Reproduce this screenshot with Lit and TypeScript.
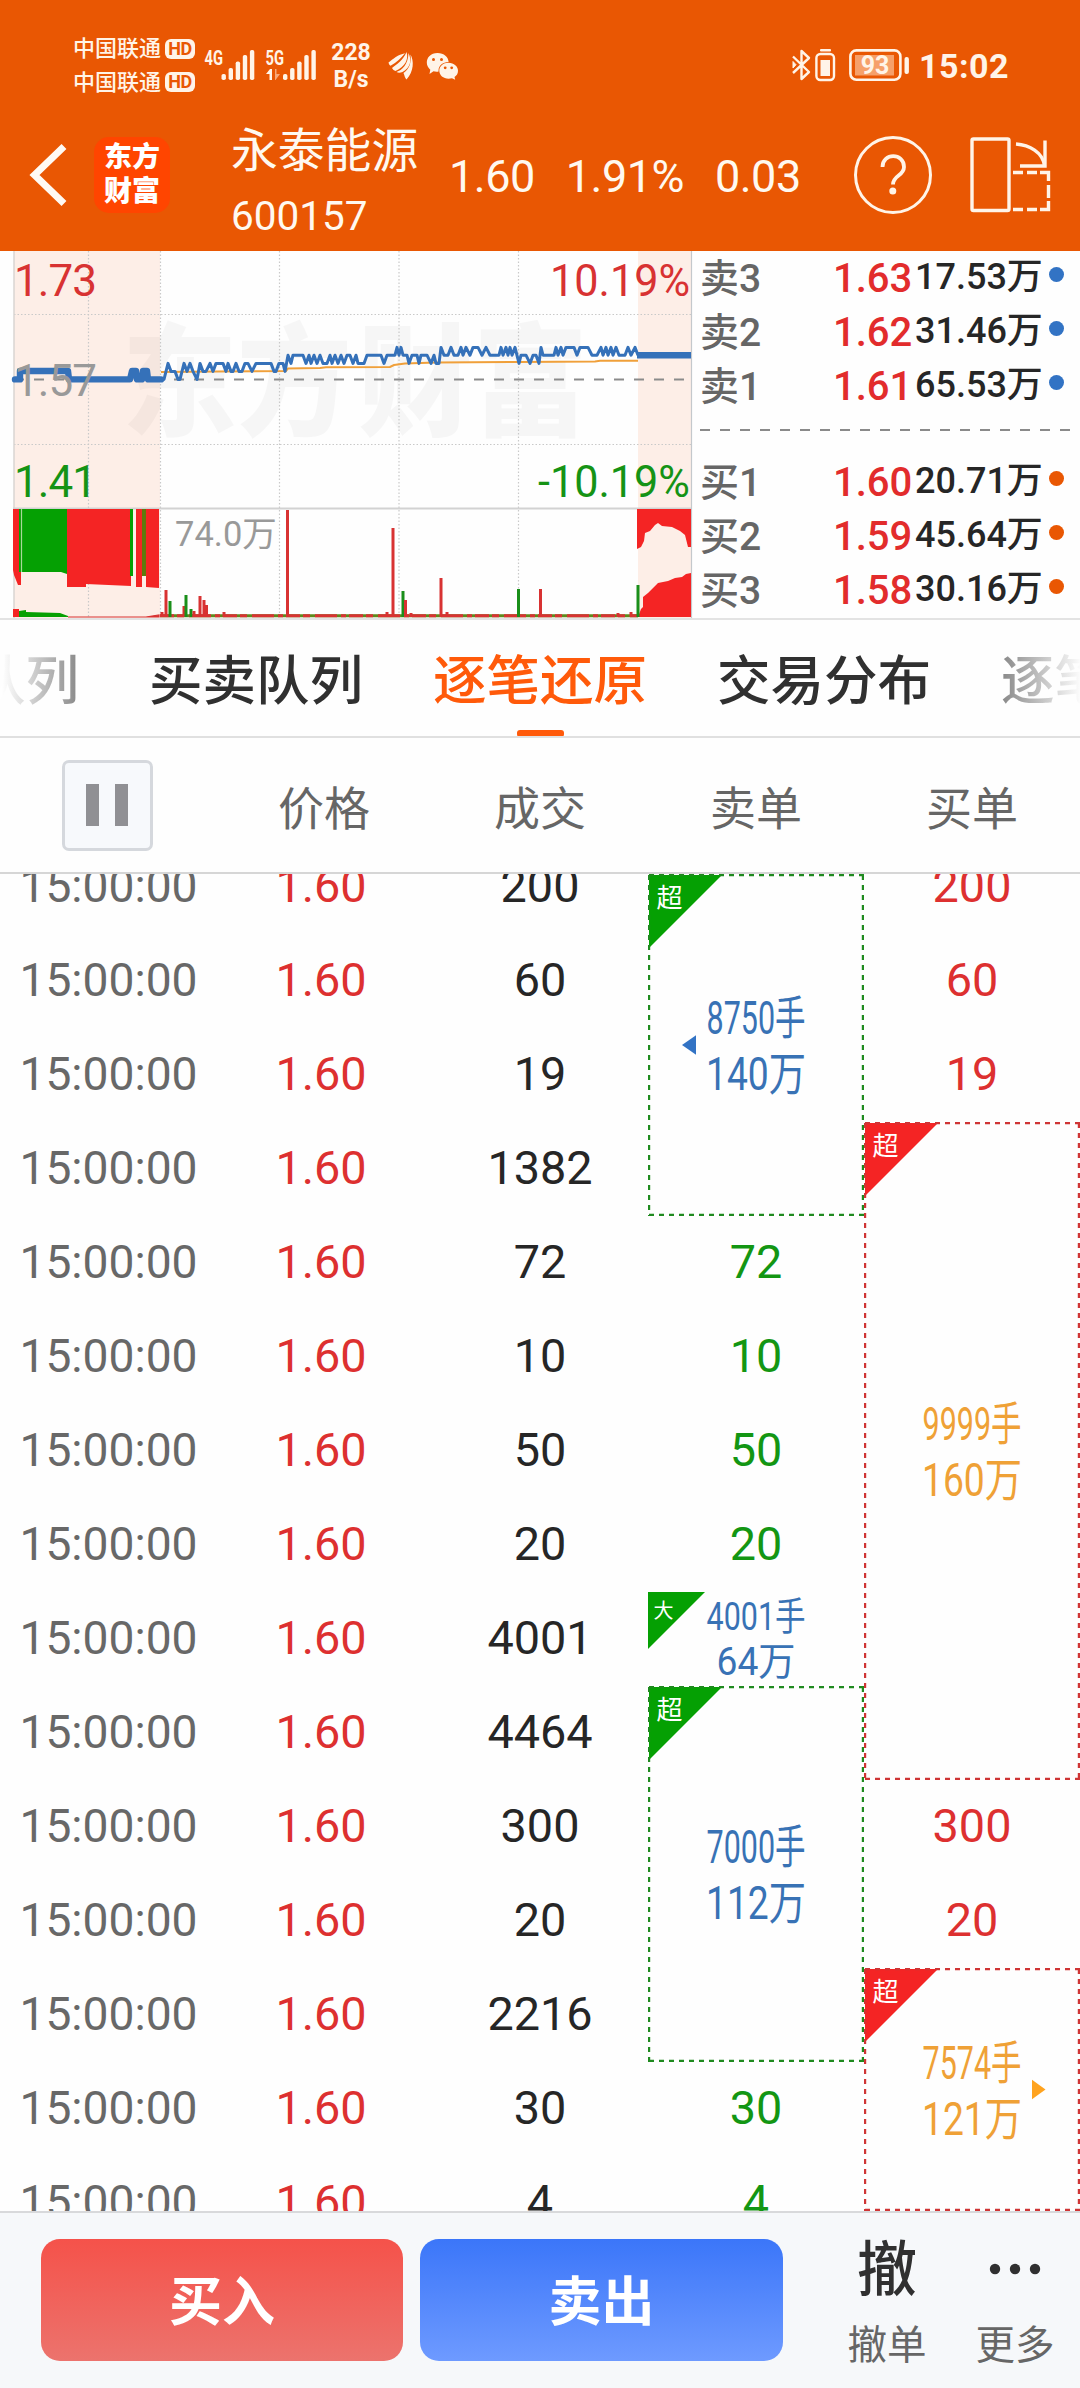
import { LitElement, html, svg, css } from "lit";
import { customElement, property } from "lit/decorators.js";
import { classMap } from "lit/directives/class-map.js";

const FONT = css`Roboto, "Noto Sans CJK SC", sans-serif`;

/* ---------- status bar ---------- */

@customElement("status-bar")
class StatusBar extends LitElement {
  static styles = css`
    :host { display: flex; align-items: flex-start; height: 122px; padding: 32px 72px 0 73px; box-sizing: border-box; color: #fff4e8; font-family: ${FONT}; }
    .carriers { display: grid; row-gap: 0; width: 122px; }
    .carrier { display: flex; align-items: center; gap: 4px; height: 33.5px; font-size: 22px; line-height: 33px; white-space: nowrap; font-weight: 500; }
    .hd { width: 30px; height: 20px; border-radius: 6px; background: #fff4e8; color: #e95703; font-size: 18px; line-height: 20px; font-weight: 700; text-align: center; letter-spacing: -0.5px; }
    .signal { margin-left: 7px; margin-top: 14px; }
    .signal.second { margin-left: 10px; }
    .rate { margin-left: 11px; margin-top: 7px; width: 44px; font-size: 23px; line-height: 27px; font-weight: 700; text-align: center; }
    .wing { margin-left: 15px; margin-top: 19px; }
    .chat { margin-left: 12px; margin-top: 19px; }
    .right { display: flex; margin-left: auto; margin-top: 16px; }
    .small { margin-left: 3px; }
    .batt { margin-left: 13px; }
    .time { margin-left: 8px; width: 89px; font-size: 34px; line-height: 36px; font-weight: 700; letter-spacing: 0.5px; }
    .tag { font: 700 21px ${FONT}; fill: #fff4e8; }
    .pct { font: 700 25px ${FONT}; fill: #fff4e8; }
  `;

  private bars(x: number) {
    return [6, 12, 18.5, 25, 30].map((h, i) => svg`<rect x=${x + i * 7.1} y=${34 - h} width="4.4" height=${h} rx="1.8" fill="#fff4e8"/>`);
  }

  render() {
    return html`
      <div class="carriers">
        ${[0, 1].map(() => html`<div class="carrier"><span>中国联通</span><span class="hd">HD</span></div>`)}
      </div>
      <svg class="signal" width="53" height="36">
        <text class="tag" x="2.500" y="18.500" textLength="18.500" lengthAdjust="spacingAndGlyphs">4G</text>${this.bars(19.500)}
      </svg>
      <svg class="signal second" width="53" height="36">
        <text class="tag" x="0.500" y="18.500" textLength="18.500" lengthAdjust="spacingAndGlyphs">5G</text>
        <path d="M1 28 L5 23 H7 V34 H4.5 V28Z" fill="#fff4e8"/><path d="M10 23 H11.5 V28 H15 L10.5 34 H10Z" fill="#f8a878"/>
        ${this.bars(18)}
      </svg>
      <div class="rate">228<br />B/s</div>
      <svg class="wing" width="26" height="30" fill="#fff4e8">
        <path d="M0.500 11.500 C5 8 10 3.500 17 2.200 C13 7 9 11 2.500 14.800 C1.500 14 0.800 13 0.500 11.500Z"/>
        <path d="M4 17 C9 13 15 9.500 18.500 1 C21 8 17 16 7.500 20 C6 19.500 4.800 18.500 4 17Z"/>
        <path d="M8.500 21 C14 19 20 14 20.500 2 C24 9 22.500 17 14.500 21 C12 22 10 21.800 8.500 21Z"/>
        <path d="M18.500 28.500 C17 27 16.500 24.500 15.500 22 C21 18.500 23.500 12 22.500 3.500 C26 10 26 20 18.500 28.500Z"/>
      </svg>
      <svg class="chat" width="34" height="30">
        <path d="M11.5 2 C18 2 22.5 6 22.6 11 C16 11 12 15.500 12.600 20.500 C10.500 21 9 20.600 7.500 20.300 L3.500 23 L4.300 18.700 C-2.500 13 1 2 11.500 2Z" fill="#fff4e8"/>
        <path d="M22.500 11.800 C28 11.800 32 15.500 32 19.700 C32 22.500 30.700 24.500 28.500 26 L29.200 28.800 L26 27.200 C19 29 13.300 25 13.300 19.700 C13.300 15.300 17.300 11.800 22.500 11.800Z" fill="#fff4e8"/>
        <g fill="#e95703"><circle cx="7.500" cy="8.500" r="1.500"/><circle cx="15.500" cy="8.500" r="1.500"/><circle cx="19.200" cy="16.800" r="1.400"/><circle cx="25.700" cy="16.800" r="1.400"/></g>
      </svg>
      <div class="right">
        <svg width="21" height="34" fill="none" stroke="#fff4e8" stroke-width="2.4" stroke-linejoin="round">
          <path d="M2 8.500 L18 24 L10.500 31 V3 L18 10 L2 25"/><path d="M2 13.500 V20 L5 16.700Z" fill="#fff4e8" stroke-width="1"/>
        </svg>
        <svg class="small" width="21" height="34"><rect x="1.400" y="6" width="17.600" height="26" rx="4" fill="none" stroke="#fff4e8" stroke-width="2.400"/><rect x="5" y="1" width="11" height="2.600" rx="1" fill="#fff4e8"/><rect x="5.500" y="12" width="9.500" height="16" fill="#fff4e8"/></svg>
        <svg class="batt" width="62" height="34">
          <rect x="1.400" y="2.400" width="50" height="29.400" rx="6" fill="none" stroke="#fff4e8" stroke-width="2.600"/>
          <rect x="6" y="7" width="39" height="20.500" fill="#f6a06a"/><rect x="55.500" y="9" width="4.400" height="17" rx="2" fill="#fff4e8"/>
          <text class="pct" x="26" y="26" text-anchor="middle">93</text>
        </svg>
        <div class="time">15:02</div>
      </div>
    `;
  }
}

/* ---------- title bar ---------- */

@customElement("title-bar")
class TitleBar extends LitElement {
  static styles = css`
    :host { display: flex; align-items: flex-start; height: 129px; color: #fff9f0; font-family: ${FONT}; }
    .back { margin: 20px 0 0 28px; }
    .logo { display: grid; place-content: center; width: 76px; height: 76px; margin: 15px 0 0 24px; border-radius: 15px; background: #ff4500; font-size: 28px; line-height: 34px; font-weight: 900; text-align: center; color: #fff; }
    .name { width: 210px; margin-left: 61px; }
    .cn { font-size: 46.8px; line-height: 58px; white-space: nowrap; }
    .code { font-size: 40.5px; line-height: 48px; margin-top: 12px; }
    .quote { display: flex; margin-top: 29px; font-size: 45px; line-height: 52px; width: 404px; gap: 31px; margin-left: 8px; white-space: nowrap; }
    .quote span { letter-spacing: -0.5px; }
    .icons { display: flex; margin-top: 12px; gap: 35px; margin-left: -1px; }
  `;
  render() {
    return html`
      <svg class="back" width="42" height="68" fill="none" stroke="#fffaf3" stroke-width="7"><path d="M36 4.500 L6.500 33 L36 61.500" stroke-linejoin="miter"/></svg>
      <div class="logo"><span>东方</span><span>财富</span></div>
      <div class="name"><div class="cn">永泰能源</div><div class="code">600157</div></div>
      <div class="quote"><span>1.60</span><span>1.91%</span><span>0.03</span></div>
      <div class="icons">
        <svg width="82" height="82" fill="none" stroke="#fff4e8">
          <circle cx="41" cy="41" r="37.500" stroke-width="3"/>
          <path d="M30.500 33 C30.500 18.500 52 18.500 52 33 C52 42 41 41 41 50.500" stroke-width="3.800"/><circle cx="40.800" cy="57" r="3.500" fill="#fff4e8" stroke="none"/>
        </svg>
        <svg width="82" height="82" fill="none" stroke="#fff4e8" stroke-width="3.400">
          <rect x="3" y="5" width="37" height="71.500" rx="1.500"/>
          <path d="M47 10 C60 11 74 18 75.500 32" /><path d="M76 6.500 V32 H51"/>
          <path d="M44 38.500 H54 M58 38.500 H68 M71 38.500 H79.500 V47 M79.500 51 V64 M79.500 67 V75.500 H71 M68 75.500 H58 M54 75.500 H44"/>
        </svg>
      </div>
    `;
  }
}

/* ---------- minute chart ---------- */

const AUCTION = "15,379.400 20,379.400 20,371 68,371 69,379.400 130,379.400 132,371 136,371 137,379.400 142,379.400 143,371 147,371 148,379.400 161,379.400";

const LEVELS = [379.4, 371.4, 363.4, 355.2, 347.4];
const TRACK: [number, number][] = [
  [161, 0], [164, 0], [168, 2], [171, 1], [175, 1], [178, 0], [180, 0], [184, 2], [187, 1], [190, 2], [193, 1], [197, 0], [200, 2], [203, 1], [206, 1], [210, 2], [213, 1], [216, 2], [223, 2],
  [226, 1], [228, 2], [231, 1], [233, 1], [236, 2], [239, 1], [242, 1], [245, 2], [248, 2], [252, 1], [256, 2], [271, 2], [274, 1], [276, 1], [279, 2], [283, 2], [285, 1], [288, 3],
  [291, 2], [293, 3], [303, 3], [306, 2], [309, 3], [311, 2], [314, 3], [317, 2], [320, 3], [323, 2], [327, 2], [330, 3], [332, 2], [335, 3], [338, 2], [341, 3], [344, 2], [347, 3], [350, 3],
  [353, 2], [356, 3], [358, 2], [364, 2], [367, 3], [381, 3], [384, 2], [387, 3], [395, 3], [397, 4], [399, 3], [401, 4], [403, 3], [407, 3], [409, 2], [412, 3], [417, 3], [419, 2], [421, 3], [427, 3],
  [431, 2], [434, 3], [436, 2], [439, 2], [441, 4], [444, 3], [448, 3], [451, 4], [454, 3], [458, 3], [461, 4], [463, 3], [466, 4], [470, 3], [473, 4], [478, 4], [482, 3], [486, 4], [490, 3], [499, 3],
  [501, 4], [503, 3], [506, 4], [508, 3], [510, 4], [512, 3], [515, 4], [519, 2], [521, 3], [526, 3], [530, 2], [533, 3], [536, 3], [539, 2], [541, 4], [543, 3], [554, 3], [556, 4], [558, 3], [561, 4],
  [563, 3], [566, 4], [574, 4], [577, 3], [580, 4], [588, 4], [592, 3], [597, 3], [601, 4], [603, 3], [606, 4], [608, 3], [611, 4], [613, 3], [616, 4], [619, 3], [625, 3], [628, 4], [631, 3], [635, 4], [638, 3],
];

const RED = "#d83232";
const GREEN = "#1a8f1a";
const VOLUME: [number, number, string][] = [
  [162, 612, RED], [166, 590, RED], [170, 601, GREEN], [184, 606, RED], [186, 595, GREEN], [191, 609, GREEN], [194, 611, RED], [200, 596, RED], [204, 600, RED], [206.5, 605, RED], [224, 612, RED],
  [287.5, 510, RED], [387, 612, RED], [393, 528, RED], [403, 591, GREEN], [405.5, 600, RED], [411, 613, RED], [441, 578, RED], [447, 612, RED], [518.5, 589, GREEN], [540.5, 589, RED], [618, 613, RED], [631, 612, RED], [638, 585, GREEN],
];

@customElement("minute-chart")
class MinuteChart extends LitElement {
  static styles = css`
    :host { display: block; width: 693px; height: 367px; }
    svg { display: block; }
    text { font-family: ${FONT}; }
    .scale { font-size: 44px; }
    .mark { font-size: 122px; font-weight: 900; fill: #000; opacity: 0.026; }
  `;
  render() {
    return html`<svg width="693" height="367" viewBox="0 251 693 367">
      <rect x="14" y="251" width="146" height="367" fill="#fdeee7"/>
      <rect x="638" y="251" width="53" height="367" fill="#fdeee7"/>
      <text class="mark" x="122" y="426" textLength="230" lengthAdjust="spacingAndGlyphs">东方</text>
      <text class="mark" x="358" y="426" textLength="230" lengthAdjust="spacingAndGlyphs">财富</text>
      <g stroke="#c9c9c9" stroke-width="1.200" stroke-dasharray="1.500 2">
        ${[88.5, 160.5, 279.5, 399, 518.5].map((x) => svg`<path d="M${x} 251 V618"/>`)}
        ${[314.5, 444.5].map((y) => svg`<path d="M14 ${y} H691"/>`)}
      </g>
      <path d="M14 251 V618" stroke="#d9d4d2" stroke-width="1.500"/>
      <path d="M691.500 251 V618" stroke="#c4c8cc" stroke-width="1.200"/>
      <path d="M13 508.500 H691" stroke="#d2d2d2" stroke-width="2"/>
      <path d="M14 379.500 H685" stroke="#8b8b8b" stroke-width="2" stroke-dasharray="10 10"/>
      <polyline points="161,372 215,371.500 286,371 288,368.500 320,368 326,367.300 390,367 394,365 405,363.500 436,362.500 518,362 595,361.500 600,360.700 638,360.700" fill="none" stroke="#f0a03a" stroke-width="2"/>
      <polyline points=${AUCTION} fill="none" stroke="#3571b9" stroke-width="6.400" stroke-linecap="round" stroke-linejoin="round"/>
      <polyline points=${TRACK.map(([x, l]) => `${x},${LEVELS[l]}`).join(" ")} fill="none" stroke="#3571b9" stroke-width="3" stroke-linejoin="round"/>
      <path d="M637 355.200 H691" stroke="#3571b9" stroke-width="6.400"/>

      <g fill="#f42424">
        <path d="M13 509 H21 V585 H18 L14 575 L13 570Z"/>
        <path d="M67 509 H131 V586 L86 584 V587 H67Z"/>
        <path d="M136 509 H142 V587 H136Z"/>
        <path d="M146 509 H159 V588 L146 587Z"/>
        <path d="M637 509 H691 V547 H688 L685 535 L680 531 L672 527 L662 526 L658 523 L655 525 L650 531 L645 533 L644 541 L641 547 L637 549Z"/>
        <path d="M638 617 L641 609 L643 607 V597 L648 593 L658 583 L668 581 L675 578 L682 577 L686 574 L691 573 V617Z"/>
        <path d="M13 609 H19 V617 H13Z"/>
      </g>
      <g fill="#05a003">
        <path d="M22 509 H67 V574 L61 572 H22Z"/><path d="M19 509 H21 V572 H19Z"/>
        <path d="M130 509 H133 V576 H130Z"/><path d="M19 611 L26 610 L26 612 L60 613 L68 616 V617 H19Z"/>
      </g>
      <path d="M21.500 509 V572" stroke="#a8d89a" stroke-width="1.200"/>
      <path d="M142 509 H146 V576 H142Z" fill="#5f7a0c"/>
      <path d="M68 617 H146 L159 615 V617Z" stroke="#d83232" stroke-width="1.200" fill="#d83232"/>
      <path d="M160 615.700 H638" stroke="#5f8a1c" stroke-width="3"/>
      <path d="M160 615.700 H638" stroke="#d83232" stroke-width="3" stroke-dasharray="14 3 7 5 22 4 5 3"/>
      ${VOLUME.map(([x, y, c]) => svg`<path d="M${x} ${y} V617" stroke=${c} stroke-width="3"/>`)}
      <g class="scale">
        <text x="14" y="296" fill="#d83232" textLength="83">1.73</text>
        <text x="14" y="396" fill="#999" textLength="83">1.57</text>
        <text x="14" y="497" fill="#159315" textLength="83">1.41</text>
        <text x="690" y="296" fill="#d83232" text-anchor="end" textLength="140" lengthAdjust="spacingAndGlyphs">10.19%</text>
        <text x="690" y="497" fill="#159315" text-anchor="end" textLength="152" lengthAdjust="spacingAndGlyphs">-10.19%</text>
      </g>
      <text x="175" y="546" font-size="34.500" fill="#999">74.0万</text>
    </svg>`;
  }
}

/* ---------- order book ---------- */

@customElement("order-book")
class OrderBook extends LitElement {
  static styles = css`
    :host { display: flex; flex-direction: column; width: 387px; height: 367px; font-family: ${FONT}; font-weight: 500; }
    .row { display: grid; grid-template-columns: 133px 82px 134px 15px; align-items: baseline; height: 54px; padding-left: 7px; line-height: 55px; white-space: nowrap; }
    .label { font-size: 39px; color: #666; }
    .price { font-size: 40px; color: #e22c2c; }
    .vol { font-size: 36px; color: #262626; position: relative; top: -3px; }
    .dot { width: 15px; height: 15px; border-radius: 50%; background: #3273c4; align-self: start; margin-top: 15.5px; }
    .buy .dot { background: #e95703; }
    .gap { display: block; height: 42px; flex: none; }
  `;
  private row(kind: string, label: string, price: string, vol: string) {
    return html`<div class="row ${kind}"><span class="label">${label}</span><span class="price">${price}</span><span class="vol">${vol}</span><i class="dot"></i></div>`;
  }
  render() {
    return html`
      ${this.row("sell", "卖3", "1.63", "17.53万")}
      ${this.row("sell", "卖2", "1.62", "31.46万")}
      ${this.row("sell", "卖1", "1.61", "65.53万")}
      <svg class="gap" width="387" height="42"><path d="M7 17 H380" stroke="#8a8a8a" stroke-width="2" stroke-dasharray="10 10"/></svg>
      ${this.row("buy", "买1", "1.60", "20.71万")}
      ${this.row("buy", "买2", "1.59", "45.64万")}
      ${this.row("buy", "买3", "1.58", "30.16万")}
    `;
  }
}

/* ---------- merged order block ---------- */

@customElement("order-block")
class OrderBlock extends LitElement {
  @property() side = "sell";
  @property() tag = "超";
  @property() lots = "";
  @property() amount = "";
  @property() arrow = "";
  @property({ type: Number }) h = 0;
  @property({ type: Boolean }) small = false;

  static styles = css`
    :host { display: block; }
    svg { display: block; }
    text { font-family: ${FONT}; }
  `;
  render() {
    const sell = this.side === "sell";
    const fill = sell ? "#05a003" : "#f42424";
    const line = sell ? "#1f8a1f" : "#cf3535";
    const ink = sell ? "#3872b5" : "#efa136";
    const m = this.h / 2;
    const t = this.small ? 57 : 73;
    const size = this.small ? 38.5 : 46;
    const x0 = this.small ? 0 : 1;
    return html`<svg width="216" height=${this.h}>
      <path d="M${x0} ${x0} H${x0 + t} L${x0} ${x0 + t}Z" fill=${fill}/>
      ${this.small ? "" : svg`<path d="M1 1 H216 M1 ${this.h - 1} H216 M1 1 V${this.h} M215 1 V${this.h}" stroke=${line} stroke-width="2.400" stroke-dasharray="5 5" fill="none"/>`}
      <text x=${this.small ? 5.5 : 8.5} y=${this.small ? 26 : 33} font-size=${this.small ? 20 : 26} fill="#fff">${this.tag}</text>
      <text x="108" y=${this.small ? 38 : m - 11} font-size=${size} fill=${ink} text-anchor="middle" textLength="99" lengthAdjust="spacingAndGlyphs">${this.lots}</text>
      <text x="108" y=${this.small ? 83 : m + 45} font-size=${size} fill=${ink} text-anchor="middle" textLength=${this.small ? 79 : 100} lengthAdjust="spacingAndGlyphs">${this.amount}</text>
      ${this.arrow === "left" ? svg`<path d="M34 ${m} L48 ${m - 9.8} V${m + 9.8}Z" fill="#3273c4"/>` : ""}
      ${this.arrow === "right" ? svg`<path d="M181.500 ${m} L168 ${m - 9.8} V${m + 9.8}Z" fill="#ffa31f"/>` : ""}
    </svg>`;
  }
}

/* ---------- root ---------- */

const TABS = ["队列", "买卖队列", "逐笔还原", "交易分布", "逐笔"];
const TRADES = ["200", "60", "19", "1382", "72", "10", "50", "20", "4001", "4464", "300", "20", "2216", "30", "4"];
const SELLS: [number, string][] = [[5, "72"], [6, "10"], [7, "50"], [8, "20"], [14, "30"], [15, "4"]];
const BUYS: [number, string][] = [[1, "200"], [2, "60"], [3, "19"], [11, "300"], [12, "20"]];

@customElement("app-root")
class AppRoot extends LitElement {
  static styles = css`
    :host { display: flex; flex-direction: column; width: 1080px; height: 2388px; overflow: hidden; background: #fefefe; font-family: ${FONT}; }
    .top { background: #e95703; height: 251px; flex: none; }
    .market { display: flex; height: 367px; flex: none; }
    .tabs { display: flex; justify-content: center; gap: 70px; height: 120px; flex: none; box-sizing: border-box; border-top: 2px solid #e3e3e3; border-bottom: 2px solid #e0e0e0; overflow: hidden; }
    .tab { flex: none; display: flex; flex-direction: column; align-items: center; font-size: 53.5px; line-height: 110px; height: 118px; font-weight: 500; color: #303030; white-space: nowrap; padding-top: 7px; box-sizing: border-box; }
    .active { color: #ff5a0a; }
    .active::after { content: ""; width: 47px; height: 7px; border-radius: 3px; background: #ff5a0a; margin-top: -7px; }
    .fadeleft { background: linear-gradient(90deg, #fff 28%, #888 100%); -webkit-background-clip: text; background-clip: text; color: transparent; }
    .faderight { background: linear-gradient(90deg, #888 0%, #fff 76%); -webkit-background-clip: text; background-clip: text; color: transparent; }
    .heads { display: grid; grid-template-columns: repeat(5, 216px); align-items: center; justify-items: center; height: 136px; flex: none; box-sizing: border-box; border-bottom: 2px solid #d6d6d6; font-size: 46px; color: #666; }
    .pause { display: flex; justify-content: center; align-items: center; gap: 16px; width: 91px; height: 91px; box-sizing: border-box; border: 3px solid #d5d8dd; border-radius: 7px; background: #f7f9fc; margin-right: 2px; }
    .pause i { width: 13px; height: 42px; background: #909094; }
    .list { height: 1337px; flex: none; overflow: hidden; }
    .grid { display: grid; grid-template-columns: repeat(5, 216px); grid-template-rows: repeat(15, 94px); margin-top: -34px; font-size: 46.8px; line-height: 93px; text-align: center; }
    .time { grid-column: 1; color: #686868; font-size: 46.2px; padding-left: 1px; }
    .price { grid-column: 2; color: #dd3030; padding-right: 6px; }
    .trade { grid-column: 3; color: #262626; }
    .sell { grid-column: 4; color: #139613; }
    .buy { grid-column: 5; color: #dd3030; }
    .r1 { grid-row: 1; } .r2 { grid-row: 2; } .r3 { grid-row: 3; } .r4 { grid-row: 4; } .r5 { grid-row: 5; }
    .r6 { grid-row: 6; } .r7 { grid-row: 7; } .r8 { grid-row: 8; } .r9 { grid-row: 9; } .r10 { grid-row: 10; }
    .r11 { grid-row: 11; } .r12 { grid-row: 12; } .r13 { grid-row: 13; } .r14 { grid-row: 14; } .r15 { grid-row: 15; }
    .s1 { grid-column: 4; grid-row: 1 / 5; margin-top: 34px; }
    .s2 { grid-column: 4; grid-row: 9; }
    .s3 { grid-column: 4; grid-row: 10 / 14; }
    .b1 { grid-column: 5; grid-row: 4 / 11; }
    .b2 { grid-column: 5; grid-row: 13 / 16; }
    .foot { display: flex; align-items: flex-start; height: 177px; flex: none; box-sizing: border-box; border-top: 2px solid #d8d9db; background: #f6f8fa; padding: 26px 0 0 41px; }
    .btn { width: 362px; height: 122px; border-radius: 19px; color: #fff; font-size: 53px; font-weight: 700; line-height: 128px; text-align: center; background: linear-gradient(#f5524a, #ec736d); }
    .btn.blue { margin-left: 17px; width: 363px; background: linear-gradient(#3b76f9, #6e9aff); }
    .act { display: flex; flex-direction: column; align-items: center; width: 100px; margin-left: 54px; font-size: 39.5px; line-height: 54px; color: #666; }
    .act.more { margin-left: 28px; }
    .glyph { height: 80px; font-size: 60px; line-height: 64px; font-weight: 500; color: #303030; }
    .act svg { display: block; height: 80px; }
  `;
  render() {
    return html`
      <div class="top"><status-bar></status-bar><title-bar></title-bar></div>
      <div class="market"><minute-chart></minute-chart><order-book></order-book></div>
      <nav class="tabs">
        ${TABS.map((t, i) => html`<div class=${classMap({ tab: true, active: i === 2, fadeleft: i === 0, faderight: i === 4 })}>${t}</div>`)}
      </nav>
      <div class="heads">
        <div class="pause"><i></i><i></i></div>
        <span>价格</span><span>成交</span><span>卖单</span><span>买单</span>
      </div>
      <div class="list"><div class="grid">
        ${TRADES.map((q, i) => html`<span class="time r${i + 1}">15:00:00</span><span class="price r${i + 1}">1.60</span><span class="trade r${i + 1}">${q}</span>`)}
        ${SELLS.map(([r, q]) => html`<span class="sell r${r}">${q}</span>`)}
        ${BUYS.map(([r, q]) => html`<span class="buy r${r}">${q}</span>`)}
        <order-block class="s1" side="sell" lots="8750手" amount="140万" arrow="left" h="342"></order-block>
        <order-block class="s2" side="sell" tag="大" lots="4001手" amount="64万" h="94" small></order-block>
        <order-block class="s3" side="sell" lots="7000手" amount="112万" h="376"></order-block>
        <order-block class="b1" side="buy" lots="9999手" amount="160万" h="658"></order-block>
        <order-block class="b2" side="buy" lots="7574手" amount="121万" arrow="right" h="243"></order-block>
      </div></div>
      <footer class="foot">
        <div class="btn">买入</div><div class="btn blue">卖出</div>
        <div class="act"><span class="glyph">撤</span><span>撤单</span></div>
        <div class="act more"><svg width="60" height="80" fill="#303030"><circle cx="10" cy="30" r="5.200"/><circle cx="30" cy="30" r="5.200"/><circle cx="50" cy="30" r="5.200"/></svg><span>更多</span></div>
      </footer>
    `;
  }
}
